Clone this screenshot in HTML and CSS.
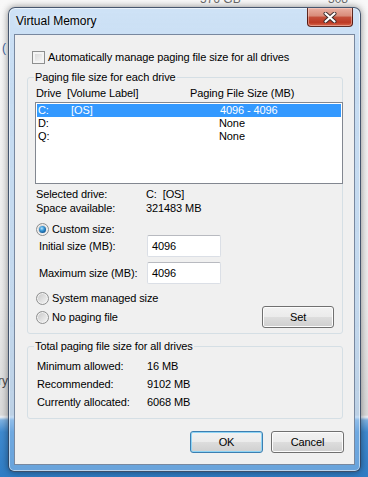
FILE: index.html
```html
<!DOCTYPE html>
<html lang="en">
<head>
    <meta charset="UTF-8">
    <meta name="viewport" content="width=device-width, initial-scale=1.0">
    <title>Virtual Memory</title>
    <link rel="stylesheet" href="styles.css">
</head>
<body>
    <div class="desktop">
        <!-- Bits of the window behind the dialog -->
        <span class="bg-text bg-size1">576 GB</span>
        <span class="bg-text bg-size2">308 GB</span>
        <span class="bg-text bg-paren">(</span>
        <span class="bg-text bg-word">ry</span>

        <div class="window">
            <div class="titlebar">
                <span class="title">Virtual Memory</span>
                <button class="close-btn" title="Close">
                    <svg width="14" height="11" viewBox="0 0 14 11">
                        <path d="M2.5 1.5 L11.5 9.5 M11.5 1.5 L2.5 9.5" stroke="#3a2a2a" stroke-width="4" stroke-linecap="round" fill="none"/>
                        <path d="M2.5 1.5 L11.5 9.5 M11.5 1.5 L2.5 9.5" stroke="#ffffff" stroke-width="2.2" stroke-linecap="round" fill="none"/>
                    </svg>
                </button>
            </div>

            <div class="dialog">
                <div class="auto-row">
                    <span class="checkbox"></span>
                    <span>Automatically manage paging file size for all drives</span>
                </div>

                <div class="group">
                    <div class="group-title">Paging file size for each drive</div>
                    <div class="list-header">
                        <span class="head-drive">Drive</span>
                        <span class="head-label">[Volume Label]</span>
                        <span>Paging File Size (MB)</span>
                    </div>
                    <div class="listbox">
                        <div class="list-row selected">
                            <span class="cell-drive">C:</span>
                            <span class="cell-label">[OS]</span>
                            <span class="cell-size">4096 - 4096</span>
                        </div>
                        <div class="list-row">
                            <span class="cell-drive">D:</span>
                            <span class="cell-label"></span>
                            <span>None</span>
                        </div>
                        <div class="list-row">
                            <span class="cell-drive">Q:</span>
                            <span class="cell-label"></span>
                            <span>None</span>
                        </div>
                    </div>

                    <div class="info">
                        <span>Selected drive:</span>
                        <span>C:&nbsp;&nbsp;[OS]</span>
                        <span>Space available:</span>
                        <span>321483 MB</span>
                    </div>

                    <div class="option option-custom">
                        <span class="radio checked"></span>
                        <span>Custom size:</span>
                    </div>
                    <div class="size-row size-initial">
                        <span>Initial size (MB):</span>
                        <div class="textbox">4096</div>
                    </div>
                    <div class="size-row size-max">
                        <span>Maximum size (MB):</span>
                        <div class="textbox">4096</div>
                    </div>
                    <div class="option option-system">
                        <span class="radio"></span>
                        <span>System managed size</span>
                    </div>
                    <div class="last-row">
                        <div class="option">
                            <span class="radio"></span>
                            <span>No paging file</span>
                        </div>
                        <button class="btn btn-set">Set</button>
                    </div>
                </div>

                <div class="group group-totals">
                    <div class="group-title">Total paging file size for all drives</div>
                    <div class="totals">
                        <span>Minimum allowed:</span>
                        <span>16 MB</span>
                        <span>Recommended:</span>
                        <span>9102 MB</span>
                        <span>Currently allocated:</span>
                        <span>6068 MB</span>
                    </div>
                </div>

                <div class="actions">
                    <button class="btn btn-default">OK</button>
                    <button class="btn">Cancel</button>
                </div>
            </div>
        </div>
    </div>
</body>
</html>
```

FILE: styles.css
```css
/* Page */
body {
    margin: 0;
    font-family: "Liberation Sans", Arial, sans-serif;
    font-size: 11px;
    color: #000;
}
.desktop {
    position: relative;
    width: 368px;
    height: 477px;
    overflow: hidden;
    background: linear-gradient(to bottom, #f8f8f8 0, #ebebeb 300px, #dadada 415px, #eef3f9 417px, #7fb2e2 420px, #3f8ad0 432px, #2f7cc4 477px);
}
.bg-text {
    position: absolute;
    font-size: 12px;
    line-height: 14px;
    color: #6b6b6b;
}
.bg-size1 { left: 200px; top: -8px; }
.bg-size2 { left: 328px; top: -8px; }
.bg-paren { left: 2px; top: 41px; color: #3b5f9c; }
.bg-word { left: -2px; top: 374px; color: #4a4a4a; }

/* Window frame */
.window {
    position: absolute;
    left: 8px;
    top: 7px;
    width: 353px;
    height: 465px;
    box-sizing: border-box;
    display: flex;
    flex-direction: column;
    padding: 0 5px 6px 5px;
    border: 1px solid rgba(25, 40, 65, 0.75);
    border-radius: 7px 7px 6px 6px;
    background: linear-gradient(to bottom, rgba(195, 220, 245, 0.8), rgba(160, 200, 240, 0.55) 80px, rgba(160, 200, 240, 0.5));
    box-shadow: inset 0 0 0 1px rgba(255, 255, 255, 0.55), 0 0 7px rgba(0, 0, 0, 0.45);
}
.titlebar {
    height: 26px;
    display: flex;
    justify-content: space-between;
    align-items: flex-start;
}
.title {
    margin: 6px 0 0 2px;
    font-size: 12px;
    line-height: 14px;
    text-shadow: 0 0 6px rgba(255, 255, 255, 0.9);
}
.close-btn {
    width: 46px;
    height: 19px;
    margin-right: 2px;
    padding: 0;
    display: flex;
    align-items: center;
    justify-content: center;
    border: 1px solid rgba(70, 20, 15, 0.85);
    border-top: none;
    border-radius: 0 0 4px 4px;
    background: linear-gradient(to bottom, #eab0a2 0%, #d88b79 45%, #c4503b 50%, #bd3a24 80%, #d7684c 100%);
    box-shadow: inset 0 0 0 1px rgba(255, 220, 210, 0.45);
}

/* Dialog body */
.dialog {
    flex: 1;
    box-sizing: border-box;
    padding: 0 11px 0 12px;
    border: 1px solid rgba(55, 80, 115, 0.65);
    background: #f0f0f0;
    letter-spacing: -0.1px;
}
.auto-row {
    display: flex;
    align-items: center;
    gap: 3px;
    height: 14px;
    margin-top: 15px;
    padding-left: 5px;
}
.checkbox {
    flex: none;
    width: 13px;
    height: 13px;
    box-sizing: border-box;
    border: 1px solid #8e8f8f;
    background: linear-gradient(135deg, #d4d4d4, #fbfbfb);
    box-shadow: inset 0 0 0 2px #f4f4f4;
}

/* Group boxes */
.group {
    margin-top: 13px;
    padding: 0 8px 5px 7px;
    border: 1px solid #d5dfe5;
    border-radius: 3px;
}
.group-title {
    width: fit-content;
    height: 14px;
    line-height: 14px;
    margin: -8px 0 0 -1px;
    padding: 0 1px;
    background: #f0f0f0;
}
.group-totals {
    margin-top: 12px;
    padding-bottom: 7px;
}

/* Drive list */
.list-header {
    display: flex;
    height: 14px;
    line-height: 14px;
    margin-top: 2px;
    padding-left: 1px;
}
.head-drive { width: 31px; }
.head-label { width: 123px; }
.listbox {
    height: 82px;
    box-sizing: border-box;
    margin: 2px -9px 0 0;
    padding: 1px;
    border: 1px solid #828790;
    background: #fff;
}
.list-row {
    display: flex;
    height: 13px;
    line-height: 13px;
    padding-left: 1px;
}
.list-row.selected {
    background: #3399ff;
    color: #fff;
}
.cell-drive { width: 33px; }
.cell-label { width: 148px; }
.cell-size { padding-left: 1px; }

.info {
    display: grid;
    grid-template-columns: 110px 1fr;
    line-height: 14px;
    margin-top: 3px;
    padding-left: 1px;
}

/* Radio options */
.option {
    display: flex;
    align-items: center;
    gap: 3px;
    height: 14px;
    padding-left: 1px;
}
.option-custom { margin-top: 7px; }
.option-system { margin-top: 7px; }
.radio {
    flex: none;
    width: 13px;
    height: 13px;
    box-sizing: border-box;
    display: flex;
    align-items: center;
    justify-content: center;
    border: 1px solid #8e8f8f;
    border-radius: 50%;
    background: linear-gradient(135deg, #c6c6c6, #f7f7f7);
    box-shadow: inset 0 0 0 1px #f2f2f2;
}
.radio.checked::after {
    content: "";
    width: 7px;
    height: 7px;
    border-radius: 50%;
    background: radial-gradient(circle at 40% 35%, #b7e4fb 0, #3c9ad8 35%, #0f5796 75%, #0b3f75 100%);
}

/* Size inputs */
.size-row {
    display: grid;
    grid-template-columns: 108px 74px;
    align-items: center;
    height: 22px;
    padding-left: 4px;
}
.size-initial { margin-top: -1px; }
.size-max { margin-top: 5px; }
.textbox {
    height: 22px;
    box-sizing: border-box;
    padding-left: 4px;
    line-height: 20px;
    border: 1px solid #dbdfe6;
    border-top-color: #b8bac0;
    border-radius: 2px;
    background: #fff;
}
.last-row {
    display: flex;
    justify-content: space-between;
    align-items: center;
    height: 22px;
    margin-top: 1px;
}

/* Totals */
.totals {
    display: grid;
    grid-template-columns: 110px 1fr;
    grid-auto-rows: 18px;
    align-items: center;
    margin-top: 4px;
    padding-left: 2px;
}

/* Buttons */
.btn {
    width: 73px;
    height: 22px;
    padding: 0;
    font: inherit;
    letter-spacing: inherit;
    color: #000;
    border: 1px solid #707070;
    border-radius: 3px;
    background: linear-gradient(to bottom, #f2f2f2 0%, #ebebeb 50%, #dddddd 51%, #cfcfcf 100%);
    box-shadow: inset 0 0 0 1px #fcfcfc;
}
.btn-set { width: 72px; }
.btn-default {
    border-color: #3c7fb1;
    box-shadow: inset 0 0 0 1px #8fd4f5;
}
.actions {
    display: flex;
    justify-content: flex-end;
    gap: 8px;
    margin: 12px -1px 0 0;
}
```
